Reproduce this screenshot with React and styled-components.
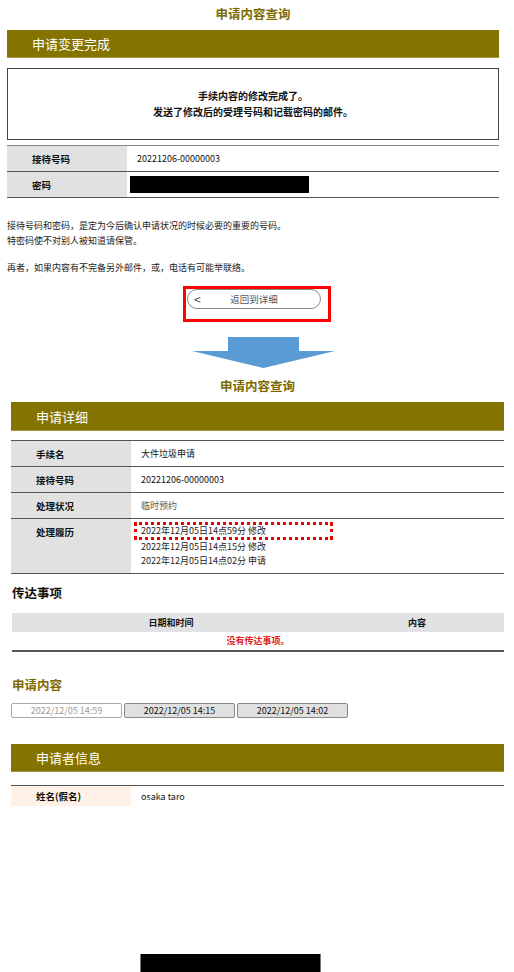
import styled, { createGlobalStyle } from "styled-components";

const GlobalStyle = createGlobalStyle`
  body {
    margin: 0;
    background: #fff;
    font-family: "Noto Sans CJK SC", "Noto Sans", sans-serif;
    color: #222;
  }
`;

const Page = styled.div`
  width: 514px;
  height: 972px;
  overflow: hidden;
`;

const Screen = styled.section`
  display: flex;
  flex-direction: column;
  margin-left: ${({ $left }) => $left}px;
  width: ${({ $width }) => $width}px;
`;

const PageTitle = styled.h1`
  margin: ${({ $top }) => $top || 0}px 0 0;
  font-size: 12.5px;
  line-height: 28px;
  font-weight: bold;
  text-align: center;
  color: #7c6a00;
`;

const SectionBar = styled.h2`
  margin: ${({ $top }) => $top}px 0 0;
  height: ${({ $h }) => $h || 28}px;
  line-height: ${({ $h }) => $h || 28}px;
  padding-left: 25px;
  background: #857300;
  border-bottom: 1px solid #a39440;
  box-sizing: border-box;
  color: #fff;
  font-size: 13px;
  font-weight: normal;
`;

const MessageBox = styled.div`
  margin-top: 10px;
  height: 72px;
  box-sizing: border-box;
  border: 1px solid #444;
  display: flex;
  flex-direction: column;
  justify-content: center;
  align-items: center;
  font-size: 10px;
  font-weight: bold;
  line-height: 16px;
  color: #111;
`;

const InfoTable = styled.div`
  margin-top: ${({ $top }) => $top}px;
  border-top: 1px solid ${({ $light }) => ($light ? "#888" : "#555")};
`;

const Row = styled.div`
  display: flex;
  min-height: ${({ $h }) => $h || 25}px;
  border-bottom: ${({ $noLine }) => ($noLine ? "none" : "1px solid #555")};
  font-size: 9px;
`;

const Label = styled.div`
  width: 120px;
  flex-shrink: 0;
  padding-left: 25px;
  box-sizing: border-box;
  background: ${({ $peach }) => ($peach ? "#fff1e6" : "#e1e1e2")};
  font-size: 9.5px;
  font-weight: bold;
  color: #111;
  display: flex;
  align-items: ${({ $top }) => ($top ? "flex-start" : "center")};
  padding-top: ${({ $top }) => ($top ? "6px" : "0")};
  line-height: 14px;
`;

const Value = styled.div`
  flex: 1;
  padding-left: ${({ $pad }) => ($pad === undefined ? 10 : $pad)}px;
  display: flex;
  align-items: center;
  color: ${({ $muted }) => ($muted ? "#555" : "#111")};
`;

const Redacted = styled.div`
  width: 179px;
  height: 17px;
  background: #000;
`;

const Notes = styled.div`
  margin-top: 20px;
  font-size: 9px;
  line-height: 15px;
  color: #222;

  p {
    margin: 0 0 12px;
  }
  p:last-child {
    margin-bottom: 0;
  }
`;

const Highlight = styled.div`
  margin-left: ${({ $left }) => $left}px;
  margin-top: 11px;
  width: 148px;
  height: 36px;
  box-sizing: border-box;
  border: 3px solid #ff0000;
`;

const BackButton = styled.button`
  display: block;
  position: relative;
  margin-left: 1px;
  width: 134px;
  height: 20px;
  padding: 0;
  border: 1px solid #8a8a8a;
  border-radius: 10px;
  background: #fff;
  font-family: inherit;
  font-size: 9.5px;
  color: #555;
  cursor: pointer;

  span {
    position: absolute;
    left: 6px;
    top: 0;
    line-height: 18px;
    font-size: 12px;
    color: #444;
  }
`;

const Arrow = styled.svg`
  display: block;
  margin: 15px 0 0 ${({ $left }) => $left}px;
`;

const History = styled.div`
  flex: 1;
  padding: 3px 0 6px 10px;
  font-size: 9px;
  line-height: 13.5px;
  color: #222;
`;

const Marked = styled.div`
  display: inline-block;
  margin-left: -7px;
  padding: 0 64px 0 4px;
  border: 3px dotted #ee0000;
  line-height: 12px;
`;

const SubHeading = styled.h3`
  margin: ${({ $top }) => $top}px 0 0 1px;
  font-size: 12.5px;
  line-height: 20px;
  font-weight: bold;
  color: ${({ $olive }) => ($olive ? "#7c6a00" : "#111")};
`;

const NoticeTable = styled.div`
  margin: 10px 0 0 1px;
  border-bottom: 2px solid #555;
  font-size: 9px;
`;

const NoticeHead = styled.div`
  display: grid;
  grid-template-columns: 318px 1fr;
  height: 19px;
  line-height: 19px;
  background: #e1e2e4;
  font-weight: bold;
  text-align: center;
  color: #111;
`;

const NoticeEmpty = styled.div`
  height: 18px;
  line-height: 18px;
  text-align: center;
  color: #e0201c;
  font-weight: bold;
`;

const Tabs = styled.div`
  display: flex;
  gap: 2px;
  margin-top: 8px;
`;

const Tab = styled.button`
  width: ${({ $w }) => $w}px;
  height: 15px;
  padding: 0;
  border: 1px solid ${({ $active }) => ($active ? "#aaa" : "#888")};
  border-radius: 2px;
  background: ${({ $active }) => ($active ? "#fff" : "#e0e0e0")};
  color: ${({ $active }) => ($active ? "#999" : "#111")};
  font-family: inherit;
  font-size: 9px;
  line-height: 13px;
  cursor: pointer;
`;

const FooterBlock = styled.div`
  margin: 148px 0 0 129px;
  width: 179px;
  height: 20px;
  background: #000;
  border-left: 1px solid #777;
  border-right: 1px solid #777;
`;

const HeadCell = styled.span`
  color: #111;
`;

export default function App() {
  return (
    <Page>
      <GlobalStyle />
      <Screen $left={7} $width={492}>
        <PageTitle>申请内容查询</PageTitle>
        <SectionBar $top={2}>申请变更完成</SectionBar>
        <MessageBox>
          <div>手续内容的修改完成了。</div>
          <div>发送了修改后的受理号码和记载密码的邮件。</div>
        </MessageBox>
        <InfoTable $top={5} $light>
          <Row>
            <Label>接待号码</Label>
            <Value>20221206-00000003</Value>
          </Row>
          <Row>
            <Label>密码</Label>
            <Value $pad={3}>
              <Redacted />
            </Value>
          </Row>
        </InfoTable>
        <Notes>
          <p>
            接待号码和密码，是定为今后确认申请状况的时候必要的重要的号码。
            <br />
            特密码使不对别人被知道请保管。
          </p>
          <p>再者，如果内容有不完备另外邮件，或，电话有可能举联络。</p>
        </Notes>
        <Highlight $left={176}>
          <BackButton>
            <span>&lt;</span>返回到详细
          </BackButton>
        </Highlight>
        <Arrow $left={185} width="143" height="31" viewBox="0 0 143 31">
          <path d="M36 0 H107 V14 H143 L71.5 31 L0 14 H36 Z" fill="#5b9bd5" />
        </Arrow>
      </Screen>

      <Screen $left={11} $width={493}>
        <PageTitle $top={4}>申请内容查询</PageTitle>
        <SectionBar $top={2} $h={29}>申请详细</SectionBar>
        <InfoTable $top={9}>
          <Row>
            <Label>手续名</Label>
            <Value>大件垃圾申请</Value>
          </Row>
          <Row>
            <Label>接待号码</Label>
            <Value>20221206-00000003</Value>
          </Row>
          <Row>
            <Label>处理状况</Label>
            <Value $muted>临时预约</Value>
          </Row>
          <Row $h={53}>
            <Label $top>处理履历</Label>
            <History>
              <Marked>2022年12月05日14点59分 修改</Marked>
              <div>2022年12月05日14点15分 修改</div>
              <div>2022年12月05日14点02分 申请</div>
            </History>
          </Row>
        </InfoTable>

        <SubHeading $top={9}>传达事项</SubHeading>
        <NoticeTable>
          <NoticeHead>
            <HeadCell>日期和时间</HeadCell>
            <HeadCell>内容</HeadCell>
          </NoticeHead>
          <NoticeEmpty>没有传达事项。</NoticeEmpty>
        </NoticeTable>

        <SubHeading $top={23} $olive>申请内容</SubHeading>
        <Tabs>
          <Tab $w={111} $active>2022/12/05 14:59</Tab>
          <Tab $w={111}>2022/12/05 14:15</Tab>
          <Tab $w={111}>2022/12/05 14:02</Tab>
        </Tabs>

        <SectionBar $top={26}>申请者信息</SectionBar>
        <InfoTable $top={13}>
          <Row $h={20} $noLine>
            <Label $peach>姓名(假名)</Label>
            <Value>osaka taro</Value>
          </Row>
        </InfoTable>
        <FooterBlock />
      </Screen>
    </Page>
  );
}
